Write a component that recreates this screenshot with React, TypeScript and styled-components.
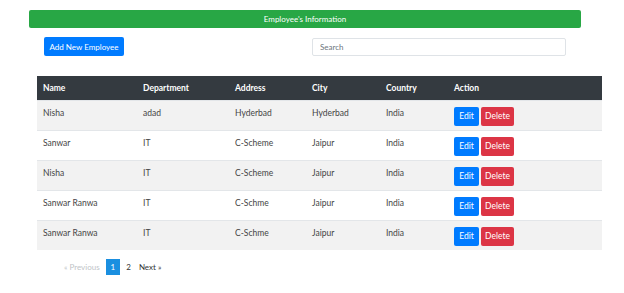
import React from 'react'
import styled, { createGlobalStyle } from 'styled-components'

const GlobalStyle = createGlobalStyle`
  html, body {
    margin: 0;
    padding: 0;
    background: #fff;
    font-family: Lato, "Open Sans", sans-serif;
    color: #212529;
  }
`

const Page = styled.div`
  width: 624px;
  height: 293px;
  padding-top: 10px;
  box-sizing: border-box;
`

const TitleBar = styled.div`
  margin: 0 43px 0 29px;
  height: 18px;
  background: #28a745;
  color: #fff;
  font-size: 8px;
  display: flex;
  align-items: center;
  justify-content: center;
  border-radius: 2px;
`

const Toolbar = styled.div`
  display: flex;
  justify-content: space-between;
  align-items: center;
  margin: 9px 58px 0 44px;
`

const AddButton = styled.button`
  background: #007bff;
  color: #fff;
  border: none;
  border-radius: 2px;
  font-family: inherit;
  font-size: 8px;
  height: 19px;
  width: 80px;
  padding: 0;
`

const Search = styled.input`
  width: 254px;
  height: 18px;
  box-sizing: border-box;
  border: 1px solid #dfe3e7;
  border-radius: 2px;
  font-family: inherit;
  font-size: 8px;
  padding: 0 7px;
  color: #495057;
  &::placeholder {
    color: #6c757d;
  }
`

const Table = styled.table`
  margin: 20px 0 0 37px;
  width: 565px;
  border-collapse: collapse;
  font-size: 8.5px;
`

const HeadCell = styled.th<{ w: number }>`
  width: ${({ w }) => w}px;
  background: #343a40;
  color: #fff;
  text-align: left;
  font-weight: 700;
  height: 24px;
  padding: 0 0 0 6px;
  box-sizing: border-box;
`

const Row = styled.tr<{ striped: boolean }>`
  background: ${({ striped }) => (striped ? '#f2f2f2' : '#fff')};
  border-top: 1px solid #e3e6e9;
`

const Cell = styled.td`
  height: 30px;
  padding: 7px 0 0 6px;
  box-sizing: border-box;
  vertical-align: top;
  color: #444;
`

const ActionCell = styled(Cell)`
  padding-top: 6px;
`

const ActionButton = styled.button<{ kind: 'edit' | 'delete' }>`
  background: ${({ kind }) => (kind === 'edit' ? '#007bff' : '#dc3545')};
  color: #fff;
  border: none;
  border-radius: 2px;
  font-family: inherit;
  font-size: 8.5px;
  height: 19px;
  padding: 0;
  width: ${({ kind }) => (kind === 'edit' ? 25 : 33)}px;
  margin-right: 2px;
`

const Pager = styled.div`
  display: flex;
  align-items: center;
  margin: 9px 0 0 62px;
  font-size: 8px;
  gap: 4px;
`

const PageLink = styled.span<{ active?: boolean; disabled?: boolean }>`
  color: ${({ active, disabled }) => (active ? '#fff' : disabled ? '#c0c4c8' : '#333')};
  background: ${({ active }) => (active ? '#1a8fe0' : 'transparent')};
  padding: ${({ active }) => (active ? '3px 5px' : '3px 2px')};
`

const employees = [
  ['Nisha', 'adad', 'Hyderbad', 'Hyderbad', 'India'],
  ['Sanwar', 'IT', 'C-Scheme', 'Jaipur', 'India'],
  ['Nisha', 'IT', 'C-Scheme', 'Jaipur', 'India'],
  ['Sanwar Ranwa', 'IT', 'C-Schme', 'Jaipur', 'India'],
  ['Sanwar Ranwa', 'IT', 'C-Schme', 'Jaipur', 'India'],
]

const columns: [string, number][] = [
  ['Name', 100],
  ['Department', 92],
  ['Address', 77],
  ['City', 74],
  ['Country', 68],
  ['Action', 154],
]

const App = () => {
  return (
    <Page>
      <GlobalStyle />
      <TitleBar>Employee's Information</TitleBar>
      <Toolbar>
        <AddButton>Add New Employee</AddButton>
        <Search placeholder="Search" />
      </Toolbar>
      <Table>
        <thead>
          <tr>
            {columns.map(([label, w]) => (
              <HeadCell key={label} w={w}>
                {label}
              </HeadCell>
            ))}
          </tr>
        </thead>
        <tbody>
          {employees.map((emp, i) => (
            <Row key={i} striped={i % 2 === 0}>
              {emp.map((v, j) => (
                <Cell key={j}>{v}</Cell>
              ))}
              <ActionCell>
                <ActionButton kind="edit">Edit</ActionButton>
                <ActionButton kind="delete">Delete</ActionButton>
              </ActionCell>
            </Row>
          ))}
        </tbody>
      </Table>
      <Pager>
        <PageLink disabled>« Previous</PageLink>
        <PageLink active>1</PageLink>
        <PageLink>2</PageLink>
        <PageLink>Next »</PageLink>
      </Pager>
    </Page>
  )
}

export default App
